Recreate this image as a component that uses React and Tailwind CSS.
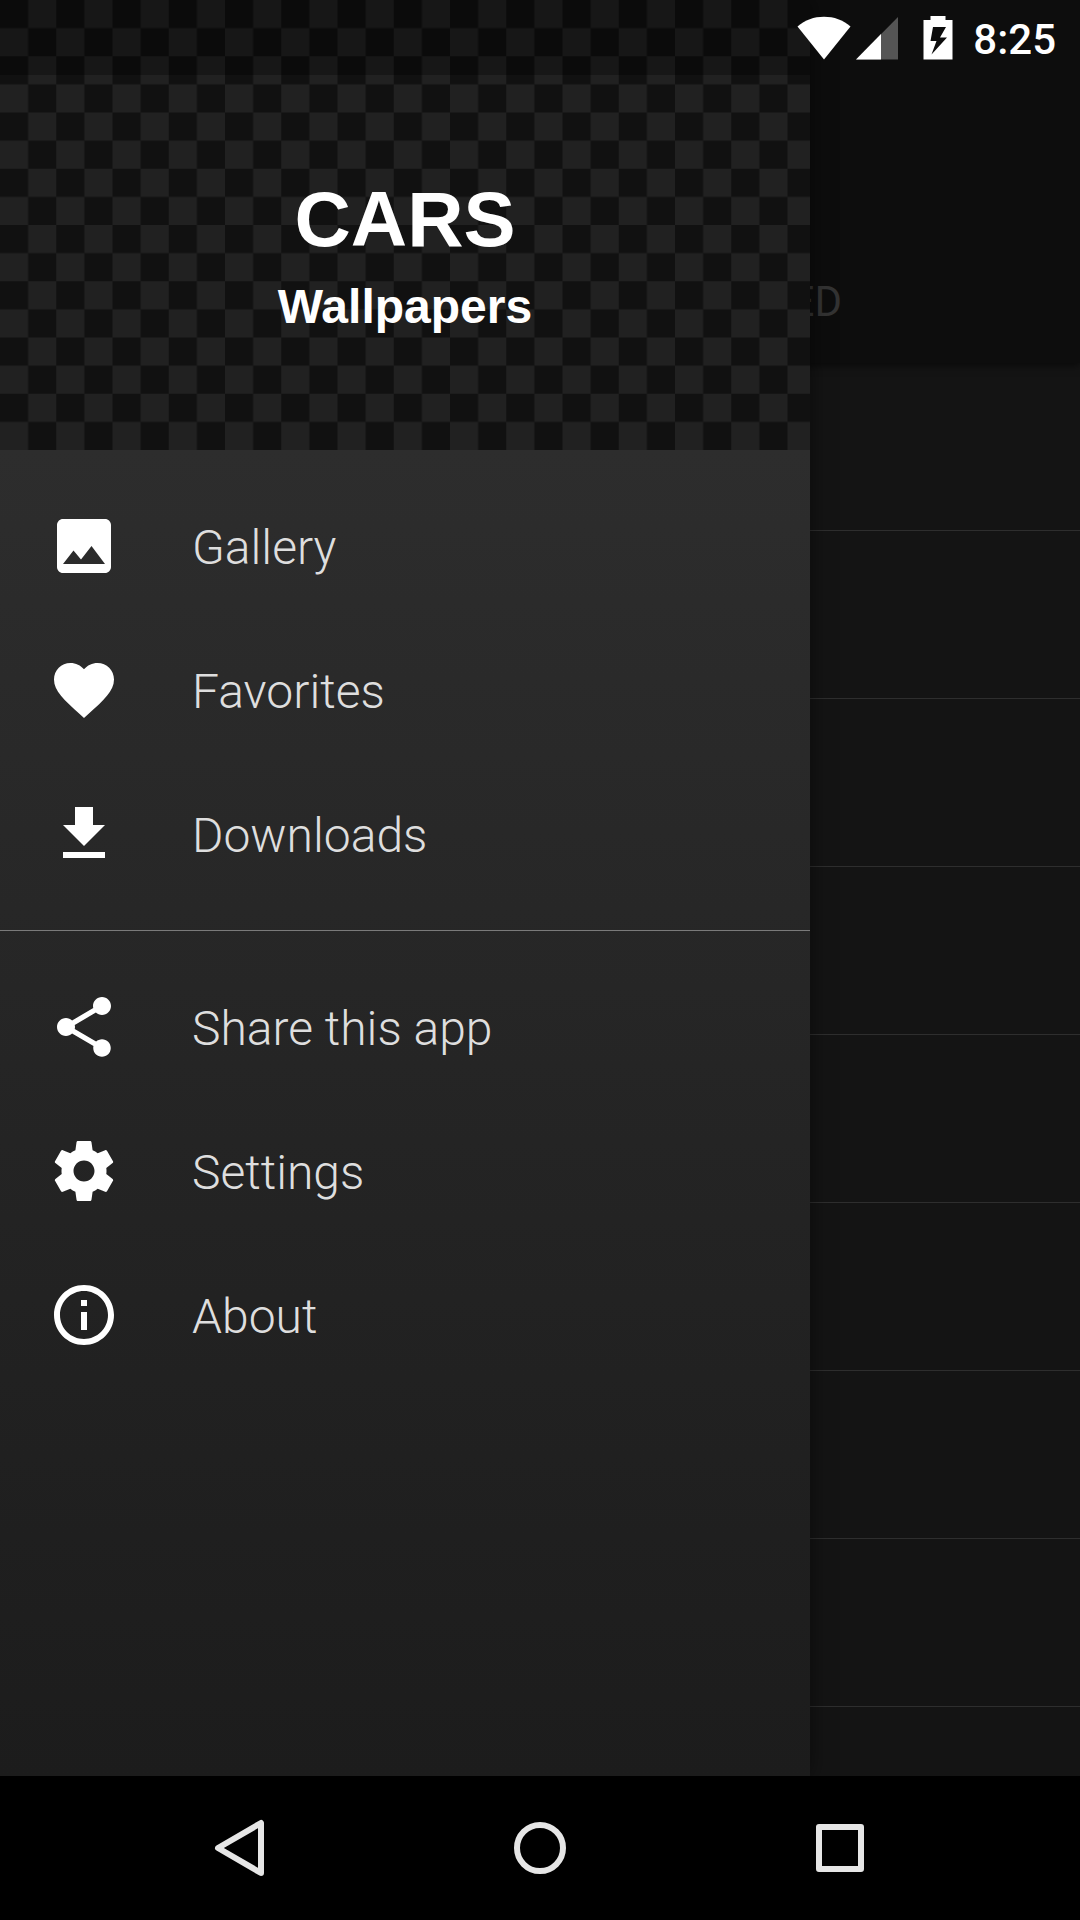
import { MdFavorite, MdGetApp, MdImage, MdInfoOutline, MdShare } from 'react-icons/md'

const SettingsIcon = ({ className }) => (
  <svg viewBox="0 0 24 24" fill="currentColor" className={className}>
    <path d="M19.43 12.98c.04-.32.07-.64.07-.98s-.03-.66-.07-.98l2.11-1.65c.19-.15.24-.42.12-.64l-2-3.46c-.12-.22-.39-.3-.61-.22l-2.49 1c-.52-.4-1.08-.73-1.69-.98l-.38-2.65C14.46 2.18 14.25 2 14 2h-4c-.25 0-.46.18-.49.42l-.38 2.65c-.61.25-1.17.59-1.69.98l-2.49-1c-.23-.09-.49 0-.61.22l-2 3.46c-.13.22-.07.49.12.64l2.11 1.65c-.04.32-.07.65-.07.98s.03.66.07.98l-2.11 1.65c-.19.15-.24.42-.12.64l2 3.46c.12.22.39.3.61.22l2.49-1c.52.4 1.08.73 1.69.98l.38 2.65c.03.24.24.42.49.42h4c.25 0 .46-.18.49-.42l.38-2.65c.61-.25 1.17-.59 1.69-.98l2.49 1c.23.09.49 0 .61-.22l2-3.46c.12-.22.07-.49-.12-.64l-2.11-1.65zM12 15.5c-1.93 0-3.5-1.57-3.5-3.5s1.57-3.5 3.5-3.5 3.5 1.57 3.5 3.5-1.57 3.5-3.5 3.5z" />
  </svg>
)

const libraryItems = [
  { label: 'Gallery', icon: MdImage },
  { label: 'Favorites', icon: MdFavorite },
  { label: 'Downloads', icon: MdGetApp }
]

const appItems = [
  { label: 'Share this app', icon: MdShare },
  { label: 'Settings', icon: SettingsIcon },
  { label: 'About', icon: MdInfoOutline }
]

const listRows = [1, 2, 3, 4, 5, 6, 7, 8]

const MenuGroup = ({ items }) => (
  <ul className="py-6">
    {items.map(({ label, icon: Icon }) => (
      <li key={label}>
        <button type="button" className="flex h-36 w-full items-center gap-[72px] px-12 text-left">
          <Icon className="size-[72px] shrink-0 text-white" />
          <span className="pt-1 text-5xl font-light text-[#dedede]">{label}</span>
        </button>
      </li>
    ))}
  </ul>
)

// Checkered backdrop, one unit per square, 16 squares high
const Checkers = () => (
  <svg
    viewBox="0 0 28.8 16"
    preserveAspectRatio="xMinYMin slice"
    aria-hidden="true"
    className="absolute inset-0 h-full w-full"
  >
    <defs>
      <pattern id="checkers" width="2" height="2" patternUnits="userSpaceOnUse">
        <rect width="2" height="2" fill="#111111" />
        <rect x="1" width="1" height="1" fill="#212121" />
        <rect y="1" width="1" height="1" fill="#212121" />
      </pattern>
    </defs>
    <rect width="100%" height="100%" fill="url(#checkers)" />
  </svg>
)

const StatusBar = () => (
  <div className="z-20 col-start-1 row-start-1 flex h-[75px] items-center justify-end self-start pr-6 text-white">
    <svg viewBox="0 0 54 44" fill="currentColor" className="mr-1 h-11 w-[54px]">
      <path d="M27 43.5 0.5 10.5C8 4 17 0.8 27 0.8S46 4 53.5 10.5z" />
    </svg>
    <svg viewBox="0 0 44 44" fill="currentColor" className="mr-6 h-11 w-11">
      <path d="M43 1v42.5H1z" fill="#555555" />
      <path d="M26 18v25.5H1z" />
    </svg>
    <svg viewBox="0 0 30 44" fill="currentColor" className="mr-5 h-11 w-[30px]">
      <path
        fillRule="evenodd"
        d="M7.5 0H22.5V4H29.5V43.5H0.5V4H7.5zM10 11 7.5 25H13.5L8.5 38.5 24 21.500H17L23 11z"
      />
    </svg>
    <span className="pt-1 text-[42px] leading-none font-medium">8:25</span>
  </div>
)

const Drawer = () => (
  <aside className="z-10 col-start-1 row-start-1 flex w-3/4 flex-col shadow-[0_0_20px_rgba(0,0,0,0.5)]">
    <header className="relative flex h-[450px] flex-col items-center justify-center bg-[#111111] pt-16 font-['Liberation_Sans',Arial,sans-serif] font-bold text-white">
      <Checkers />
      {/* scrim under the status bar */}
      <div className="absolute inset-x-0 top-0 h-[75px] bg-black/30" />
      <h1 className="relative text-[78px] leading-[96px]">CARS</h1>
      <p className="relative pt-1 text-5xl leading-[72px]">Wallpapers</p>
    </header>
    <nav className="flex-1 bg-linear-to-b from-[#2d2d2d] to-[#1c1c1c]">
      <MenuGroup items={libraryItems} />
      <hr className="border-[#7a7a7a]" />
      <MenuGroup items={appItems} />
    </nav>
  </aside>
)

const Categories = () => (
  <main className="col-start-1 row-start-1 bg-[#141414]">
    <div className="flex h-[363px] items-end justify-end bg-[#0d0d0d] shadow-[0_2px_8px_rgba(0,0,0,0.6)]">
      <button type="button" className="h-[120px] pr-[238px] pb-1 text-[42px] text-[#333333]">
        ED
      </button>
    </div>
    <ul>
      {listRows.map((row) => (
        <li key={row} className="h-[168px] border-b border-[#2e2e2e]" />
      ))}
    </ul>
  </main>
)

const NavigationBar = () => (
  <footer className="grid h-36 grid-cols-3 bg-black px-[90px] text-[#e6e6e6]">
    <button type="button" aria-label="Back" className="flex items-center justify-center">
      <svg viewBox="0 0 60 60" fill="none" stroke="currentColor" strokeWidth="6" strokeLinejoin="round" className="size-[60px]">
        <path d="M51 5v50L8 30z" />
      </svg>
    </button>
    <button type="button" aria-label="Home" className="flex items-center justify-center">
      <svg viewBox="0 0 60 60" fill="none" stroke="currentColor" strokeWidth="6" className="size-[60px]">
        <circle cx="30" cy="30" r="23" />
      </svg>
    </button>
    <button type="button" aria-label="Recent apps" className="flex items-center justify-center">
      <svg viewBox="0 0 60 60" fill="none" stroke="currentColor" strokeWidth="6" strokeLinejoin="round" className="size-[60px]">
        <rect x="9" y="9" width="42" height="42" />
      </svg>
    </button>
  </footer>
)

const App = () => {
  return (
    <div className="flex min-h-screen flex-col bg-black font-[Roboto,sans-serif]">
      <div className="grid flex-1 overflow-hidden">
        <Categories />
        <Drawer />
        <StatusBar />
      </div>
      <NavigationBar />
    </div>
  )
}

export default App
